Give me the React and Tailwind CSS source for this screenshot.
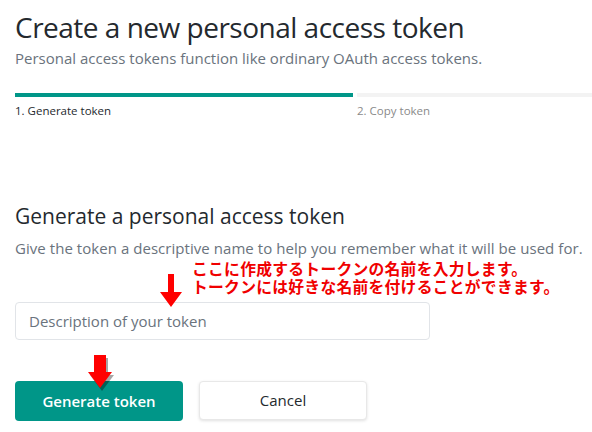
import React from "react";

function Arrow({ className, shaft = 6, head = 22, shaftH = 18, headH = 15, shadow = false }) {
  const w = head;
  const h = shaftH + headH;
  const sx = (w - shaft) / 2;
  const d = `M${sx} 0 H${sx + shaft} V${shaftH} H${w} L${w / 2} ${h} L0 ${shaftH} H${sx} Z`;
  return (
    <svg className={className} width={w + 4} height={h + 4} viewBox={`0 0 ${w + 4} ${h + 4}`}>
      {shadow && <path d={d} fill="rgba(0,0,0,0.35)" transform="translate(2 3)" />}
      <path d={d} fill="#ff0000" />
    </svg>
  );
}

export default function App() {
  return (
    <div
      className="relative w-[592px] h-[432px] overflow-hidden bg-white px-[15px]"
      style={{ fontFamily: '"Open Sans", "Noto Sans", sans-serif' }}
    >
      <h1 className="pt-[9px] text-[28px] leading-[36px] font-medium text-[#24292e] tracking-[-0.5px] whitespace-nowrap">
        Create a new personal access token
      </h1>
      <p className="mt-[3px] text-[15px] leading-[20px] text-[#6a737d] whitespace-nowrap">
        Personal access tokens function like ordinary OAuth access tokens.
      </p>
      <div className="mt-[25px] flex gap-[4px] mr-[-15px]">
        <div className="w-[338px] h-[4px] bg-[#009688]" />
        <div className="flex-1 h-[4px] bg-[#f3f3f3]" />
      </div>
      <div className="mt-[6px] flex text-[11.5px] leading-[16px]">
        <div className="w-[342px] text-[#24292e]">1. Generate token</div>
        <div className="text-[#8a8a8a]">2. Copy token</div>
      </div>

      <h2 className="mt-[84px] text-[21px] leading-[26px] text-[#24292e] whitespace-nowrap">
        Generate a personal access token
      </h2>
      <p className="mt-[9px] text-[15px] leading-[20px] text-[#6a737d] whitespace-nowrap tracking-[0.05px]">
        Give the token a descriptive name to help you remember what it will be used for.
      </p>

      <div className="mt-[44px] w-[415px] h-[38px] rounded-[4px] border border-[#e1e4e8] flex items-center px-[13px] text-[15px] text-[#6a737d]">
        Description of your token
      </div>

      <div className="mt-[41px] flex gap-[16px]">
        <button className="w-[168px] h-[40px] rounded-[4px] bg-[#009688] text-white font-semibold text-[15px]">
          Generate token
        </button>
        <button className="w-[168px] h-[39px] rounded-[4px] bg-white border border-[#e8e8e8] shadow-[0_1px_3px_rgba(0,0,0,0.12)] text-[#24292e] text-[15px]">
          Cancel
        </button>
      </div>

      <div
        className="absolute left-[192px] top-[260px] text-[15.8px] leading-[18px] font-bold text-[#f00000] whitespace-nowrap tracking-[0.25px]"
        style={{ fontFamily: '"Noto Sans CJK JP", sans-serif' }}
      >
        <div>ここに作成するトークンの名前を入力します。</div>
        <div>トークンには好きな名前を付けることができます。</div>
      </div>
      <Arrow className="absolute left-[160px] top-[274px]" shaft={6} head={22} shaftH={18} headH={15} />
      <Arrow className="absolute left-[88px] top-[355px]" shaft={12} head={24} shaftH={17} headH={16} shadow />
    </div>
  );
}
